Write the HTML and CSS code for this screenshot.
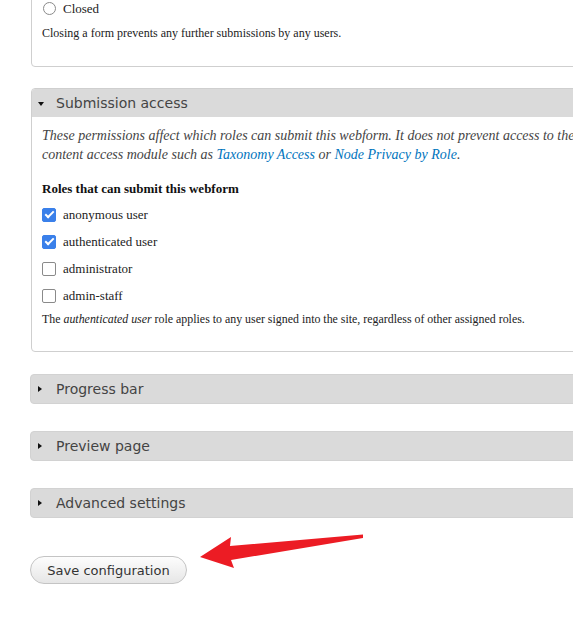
FILE: index.html
```html
<!DOCTYPE html>
<html>
<head>
<meta charset="utf-8">
<link rel="stylesheet" href="styles.css">
</head>
<body>
<div class="page">
  <div class="fs fs-status">
    <div class="radio-row"><span class="radio"></span><span class="opt">Closed</span></div>
    <div class="desc first-desc">Closing a form prevents any further submissions by any users.</div>
  </div>

  <div class="fs fs-open">
    <div class="legend"><span class="tri tri-down"></span><span class="legend-text">Submission access</span></div>
    <div class="fs-body">
      <p class="intro"><span class="line">These permissions affect which roles can submit this webform. It does not prevent access to the</span><span class="line">content access module such as <a href="#">Taxonomy Access</a> or <a href="#">Node Privacy by Role</a>.</span></p>
      <div class="group-title">Roles that can submit this webform</div>
      <div class="checks">
        <div class="check-row"><span class="cb checked"></span><span class="opt">anonymous user</span></div>
        <div class="check-row"><span class="cb checked"></span><span class="opt">authenticated user</span></div>
        <div class="check-row"><span class="cb"></span><span class="opt">administrator</span></div>
        <div class="check-row"><span class="cb"></span><span class="opt">admin-staff</span></div>
      </div>
      <div class="desc note">The <em>authenticated user</em> role applies to any user signed into the site, regardless of other assigned roles.</div>
    </div>
  </div>

  <div class="fs-collapsed"><span class="tri tri-right"></span><span class="legend-text">Progress bar</span></div>
  <div class="fs-collapsed"><span class="tri tri-right"></span><span class="legend-text">Preview page</span></div>
  <div class="fs-collapsed"><span class="tri tri-right"></span><span class="legend-text">Advanced settings</span></div>

  <div class="actions"><button class="btn">Save configuration</button></div>

  <svg class="arrow" width="573" height="629" viewBox="0 0 573 629">
    <polygon points="200,557 231,537 230,546 363,534.5 363,538 231,560 234,568" fill="#ec1c24"/>
  </svg>
</div>
</body>
</html>
```

FILE: styles.css
```css
html, body {
  margin: 0;
  padding: 0;
  background: #fff;
}
body {
  font-family: "Liberation Serif", "Times New Roman", serif;
  color: #222;
  font-size: 13px;
}
.page {
  position: relative;
  width: 573px;
  height: 629px;
  overflow: hidden;
  padding-left: 31px;
  box-sizing: border-box;
}
.fs {
  border: 1px solid #cfcfcf;
  border-radius: 4px;
  margin-right: -200px;
}
.fs-status {
  margin-top: -11px;
  padding: 10px 0 24px 10px;
}
.fs-open {
  margin-top: 21px;
}
.radio-row, .check-row {
  display: flex;
  align-items: center;
  line-height: 17px;
}
.radio {
  width: 13px;
  height: 13px;
  box-sizing: border-box;
  border: 1.5px solid #8a8a8a;
  border-radius: 50%;
  margin-left: 1px;
  margin-right: 7px;
}
.opt {
  font-size: 13px;
  color: #222;
}
.desc {
  font-size: 12px;
  line-height: 17px;
  color: #222;
}
.first-desc {
  margin-top: 8px;
}
.legend {
  height: 28px;
  line-height: 28px;
  background: #dadada;
  border-radius: 3px 3px 0 0;
  display: flex;
  align-items: center;
}
.legend-text {
  font-family: "DejaVu Sans", Verdana, sans-serif;
  font-size: 14px;
  color: #444;
}
.tri {
  display: inline-block;
  width: 0;
  height: 0;
  margin-left: 6px;
}
.tri-down {
  border-left: 3.5px solid transparent;
  border-right: 3.5px solid transparent;
  border-top: 4px solid #111;
  margin-right: 12px;
  margin-top: 2px;
}
.tri-right {
  border-top: 3.5px solid transparent;
  border-bottom: 3.5px solid transparent;
  border-left: 4px solid #111;
  margin-left: 7px;
  margin-right: 14px;
}
.fs-body {
  padding: 9px 0 23px 10px;
}
.intro {
  margin: 0;
  font-style: italic;
  font-size: 14px;
  line-height: 19px;
  color: #444;
}
.intro .line {
  display: block;
  white-space: nowrap;
}
.intro a {
  color: #0074bd;
  text-decoration: none;
}
.group-title {
  margin-top: 16px;
  font-weight: bold;
  font-size: 13px;
  line-height: 17px;
  color: #111;
}
.checks {
  margin-top: 4px;
}
.check-row {
  height: 27px;
}
.cb {
  width: 14px;
  height: 14px;
  box-sizing: border-box;
  border: 1.5px solid #8a8a8a;
  border-radius: 2px;
  margin-left: 0;
  margin-right: 7px;
  position: relative;
}
.cb.checked {
  background: #3a80ea;
  border-color: #3a80ea;
}
.cb.checked::after {
  content: "";
  position: absolute;
  left: 3.5px;
  top: 0.5px;
  width: 3px;
  height: 7px;
  border-right: 2px solid #fff;
  border-bottom: 2px solid #fff;
  transform: rotate(45deg);
}
.note {
  margin-top: 2px;
  font-size: 11.9px;
}
.fs-collapsed {
  margin-left: -1px;
  margin-right: -200px;
  height: 30px;
  box-sizing: border-box;
  border: 1px solid #d2d2d2;
  border-radius: 4px;
  background: #dadada;
  display: flex;
  align-items: center;
}
.fs-open + .fs-collapsed {
  margin-top: 22px;
}
.fs-collapsed + .fs-collapsed {
  margin-top: 27px;
}
.actions {
  margin-top: 38px;
  margin-left: -1px;
}
.btn {
  width: 157px;
  height: 28px;
  border: 1px solid #c4c4c4;
  border-radius: 14px;
  background: linear-gradient(#fdfdfd, #e6e6e6);
  font-family: "DejaVu Sans", Verdana, sans-serif;
  font-size: 13px;
  color: #333;
  padding: 0;
}
.arrow {
  position: absolute;
  left: 0;
  top: 0;
  pointer-events: none;
}
```
